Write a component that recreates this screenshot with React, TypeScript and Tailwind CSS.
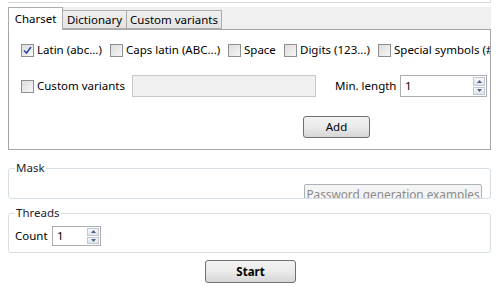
import React from 'react';

const Check: React.FC<{ checked?: boolean }> = ({ checked }) => (
  <span className="inline-flex w-[13px] h-[13px] shrink-0 items-center justify-center border border-[#8f8f8f] bg-gradient-to-br from-[#dcdcdc] to-[#f7f7f7]">
    {checked && (
      <svg width="9" height="9" viewBox="0 0 9 9">
        <path d="M1 4.5 L3.5 7 L8 1" fill="none" stroke="#2c4a9a" strokeWidth="1.6" />
      </svg>
    )}
  </span>
);

const CheckItem: React.FC<{ label: string; checked?: boolean; w: string }> = ({ label, checked, w }) => (
  <div className={`flex items-center gap-[3px] shrink-0 ${w}`}>
    <Check checked={checked} />
    <span className="whitespace-nowrap">{label}</span>
  </div>
);

const Arrow: React.FC<{ up?: boolean }> = ({ up }) => (
  <div className="flex-1 flex items-center justify-center border border-[#c3c7cf] bg-gradient-to-b from-[#f6f7f9] to-[#dfe3ea]">
    <svg width="5" height="3" viewBox="0 0 5 3">
      <path d={up ? 'M0 3 L2.5 0 L5 3 Z' : 'M0 0 L2.5 3 L5 0 Z'} fill="#4b5f8a" />
    </svg>
  </div>
);

const Spinner: React.FC<{ w: string; h: string }> = ({ w, h }) => (
  <div className={`flex shrink-0 border border-[#abadb3] bg-white ${w} ${h}`}>
    <span className="flex-1 pl-[4px] leading-none self-center">1</span>
    <div className="flex flex-col w-[14px] p-px gap-px">
      <Arrow up />
      <Arrow />
    </div>
  </div>
);

const WinButton: React.FC<{ children: React.ReactNode; className?: string }> = ({ children, className }) => (
  <div
    className={`flex items-center justify-center rounded-[3px] border border-[#707070] bg-gradient-to-b from-[#f2f2f2] via-[#ebebeb] to-[#d6d6d6] ${className ?? ''}`}
  >
    {children}
  </div>
);

export default function App() {
  return (
    <div className="w-[500px] h-[291px] bg-white text-[11.5px] text-black overflow-hidden" style={{ fontFamily: '"Noto Sans", sans-serif' }}>
      {/* bottom of the box above */}
      <div className="mx-[8px] w-[483px] h-[3px] border-b border-r border-[#d8d8d8]" />

      {/* Tab control */}
      <div className="mx-[8px] mt-[4px] w-[483px]">
        <div className="flex items-end h-[22px] bg-[#f0f0f0]">
          <div className="relative z-10 -mb-px flex items-center justify-center w-[55px] h-[23px] border border-b-0 border-[#acacac] bg-white">
            Charset
          </div>
          <div className="flex items-center justify-center w-[64px] h-[19px] border border-l-0 border-[#acacac] bg-gradient-to-b from-[#f0f0f0] to-[#e3e3e3]">
            Dictionary
          </div>
          <div className="flex items-center justify-center w-[95px] h-[19px] border border-l-0 border-[#acacac] bg-gradient-to-b from-[#f0f0f0] to-[#e3e3e3]">
            Custom variants
          </div>
        </div>
        <div className="h-[121px] border border-[#a5a5a5] bg-white px-[12px] pt-[13px] overflow-hidden">
          <div className="flex items-center h-[14px]">
            <CheckItem label="Latin (abc...)" checked w="w-[89px]" />
            <CheckItem label="Caps latin (ABC...)" w="w-[118px]" />
            <CheckItem label="Space" w="w-[56px]" />
            <CheckItem label="Digits (123...)" w="w-[94px]" />
            <CheckItem label="Special symbols (#$%...)" w="w-[120px]" />
          </div>
          <div className="flex items-center mt-[18px] h-[22px]">
            <CheckItem label="Custom variants" w="w-[111px]" />
            <div className="w-[184px] shrink-0 h-[22px] border border-[#c9c9c9] bg-[#f0f0f0]" />
            <span className="ml-[19px] w-[65px] shrink-0 whitespace-nowrap">Min. length</span>
            <Spinner w="w-[87px]" h="h-[22px]" />
          </div>
          <div className="flex mt-[19px] pl-[282px]">
            <WinButton className="w-[67px] h-[22px]">Add</WinButton>
          </div>
        </div>
      </div>

      {/* Mask */}
      <fieldset className="mx-[8px] mt-[11px] w-[483px] h-[38px] border border-[#d5dfe5] rounded-[3px] px-[6px] overflow-hidden">
        <legend className="px-[1px] leading-[14px] text-[#1e1e2e]">Mask</legend>
        <div className="flex justify-end mt-[9px] pr-[2px]">
          <div className="flex items-start justify-center w-[178px] h-[22px] border border-[#adb2b5] rounded-[2px] bg-[#f4f4f4] text-[#8a8a8a] text-[11.8px] leading-[14px] pt-[2px] whitespace-nowrap overflow-hidden">
            Password generation examples
          </div>
        </div>
      </fieldset>

      {/* Threads */}
      <fieldset className="mx-[8px] mt-[7px] w-[483px] h-[47px] border border-[#d5dfe5] rounded-[3px] px-[6px]">
        <legend className="px-[1px] leading-[14px] text-[#1e1e2e]">Threads</legend>
        <div className="flex items-center mt-[6px]">
          <span className="w-[37px]">Count</span>
          <Spinner w="w-[49px]" h="h-[20px]" />
        </div>
      </fieldset>

      <div className="flex mt-[7px] pl-[205px]">
        <WinButton className="w-[91px] h-[23px] font-bold">Start</WinButton>
      </div>
    </div>
  );
}
